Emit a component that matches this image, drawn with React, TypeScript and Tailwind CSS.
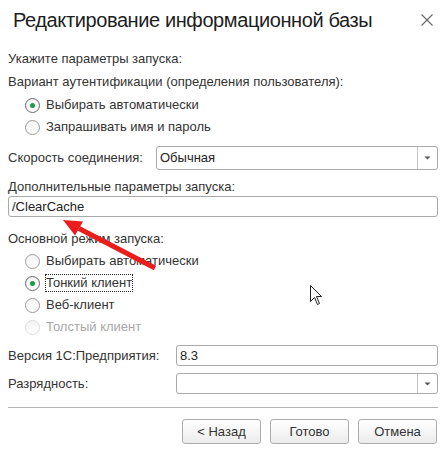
import React from "react";

function Radio({ checked, disabled, label, focused }: { checked?: boolean; disabled?: boolean; label: string; focused?: boolean }) {
  return (
    <div className="flex items-center h-[22px] pl-[17px]">
      <span
        className={
          "w-[15px] h-[15px] rounded-full border flex items-center justify-center bg-gradient-to-b from-[#f4f4f4] to-white " +
          (disabled ? "border-[#dcdcdc]" : checked ? "border-[#6a6a6a]" : "border-[#9a9a9a]")
        }
      >
        {checked && <span className="w-[5px] h-[5px] rounded-full bg-[#1f9a48]" />}
      </span>
      <span
        className={
          "ml-[5px] leading-[16px] border " +
          (focused ? "border-dotted border-[#222]" : "border-transparent") +
          (disabled ? " text-[#a8a8a8]" : "")
        }
      >
        {label}
      </span>
    </div>
  );
}

function Select({ value, h }: { value: string; h: string }) {
  return (
    <div className={"flex-1 flex border border-[#a9a9a9] rounded-[3px] bg-white " + h}>
      <div className="flex-1 flex items-center pl-[3px] text-[#222]">{value}</div>
      <div className="w-[20px] border-l border-[#c4c4c4] flex items-center justify-center">
        <svg width="7" height="4" viewBox="0 0 7 4">
          <path d="M0.5 0.5 L6.5 0.5 L3.5 3.5 Z" fill="#555" />
        </svg>
      </div>
    </div>
  );
}

function Button({ label }: { label: string }) {
  return (
    <div className="w-[79px] h-[25px] flex items-center justify-center border border-[#adadad] rounded-[3px] bg-gradient-to-b from-white to-[#ececec] text-[#333]">
      {label}
    </div>
  );
}

export default function App() {
  return (
    <div className="relative w-[446px] h-[456px] bg-white overflow-hidden font-['Liberation_Sans',Arial,sans-serif] text-[13px] text-[#333]">
      <div className="flex items-center justify-between h-[28px] mt-[6px] pl-[13px] pr-[13px]">
        <span className="text-[20px] tracking-[-0.4px] text-[#1e1e1e] leading-[24px]">Редактирование информационной базы</span>
        <svg width="12" height="12" viewBox="0 0 12 12">
          <path d="M0.5 0.5 L11.5 11.5 M11.5 0.5 L0.5 11.5" stroke="#666" strokeWidth="1.1" />
        </svg>
      </div>

      <div className="flex flex-col px-[8px]">
        <div className="flex items-center h-[22px] mt-[14px]">Укажите параметры запуска:</div>
        <div className="flex items-center h-[23px]">Вариант аутентификации (определения пользователя):</div>
        <div className="h-[1px]" />
        <Radio checked label="Выбирать автоматически" />
        <Radio label="Запрашивать имя и пароль" />

        <div className="flex items-center mt-[8px] h-[24px]">
          <div className="w-[148px]">Скорость соединения:</div>
          <Select value="Обычная" h="h-[24px]" />
        </div>

        <div className="flex items-center h-[18px] mt-[8px]">Дополнительные параметры запуска:</div>
        <div className="flex items-center h-[21px] border border-[#a9a9a9] rounded-[3px] pl-[3px] text-[#222]">/ClearCache</div>

        <div className="flex items-center h-[22px] mt-[11px]">Основной режим запуска:</div>
        <Radio label="Выбирать автоматически" />
        <Radio checked focused label="Тонкий клиент" />
        <Radio label="Веб-клиент" />
        <Radio disabled label="Толстый клиент" />

        <div className="flex items-center mt-[7px] h-[21px]">
          <div className="w-[168px]">Версия 1С:Предприятия:</div>
          <div className="flex-1 h-[21px] flex items-center border border-[#a9a9a9] rounded-[3px] pl-[3px] text-[#222]">8.3</div>
        </div>
        <div className="flex items-center mt-[7px] h-[21px]">
          <div className="w-[168px]">Разрядность:</div>
          <Select value="" h="h-[21px]" />
        </div>

        <div className="h-[1px] bg-[#b4b4b4] mt-[13px]" />

        <div className="flex justify-end gap-[9px] mt-[11px] pr-[1px]">
          <Button label="< Назад" />
          <Button label="Готово" />
          <Button label="Отмена" />
        </div>
      </div>

      <svg className="absolute left-0 top-0 pointer-events-none" width="446" height="456" viewBox="0 0 446 456">
        <line x1="155" y1="268" x2="79" y2="228.5" stroke="#ea1c1c" strokeWidth="5" />
        <polygon points="63,220 83,221.5 75,235.5" fill="#ea1c1c" />
      </svg>

      <svg className="absolute left-[310px] top-[285px] pointer-events-none" width="13" height="21" viewBox="0 0 13 21">
        <path d="M0.5 0.5 L0.5 16.5 L4.5 12.5 L7.5 19.5 L9.5 18.5 L6.5 11.5 L11.5 11.5 Z" fill="#fff" stroke="#222" strokeWidth="1" strokeLinejoin="miter" />
      </svg>
    </div>
  );
}
